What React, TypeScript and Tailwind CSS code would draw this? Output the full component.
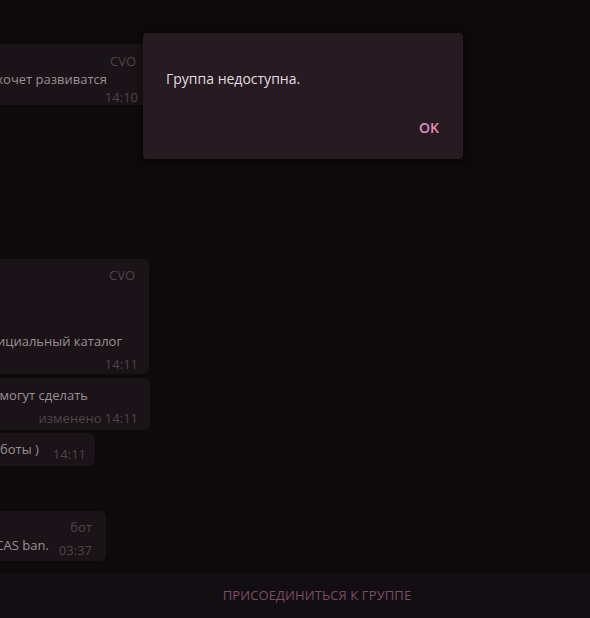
import React from "react";

const meta = "text-[13px] leading-[18px] text-[#4f454a] whitespace-nowrap";
const msg = "text-[13px] leading-[18px] text-[#9a9095] whitespace-nowrap";

export default function App() {
  return (
    <div
      className="relative w-[590px] h-[618px] overflow-hidden bg-[#0e090b]"
      style={{ fontFamily: '"Open Sans", "Noto Sans", sans-serif' }}
    >
      <div className="flex flex-col h-[573px] overflow-hidden">
        {/* bubble 1 */}
        <div className="mt-[44px] -ml-[150px] w-[300px] h-[61px] rounded-[6px] bg-[#1a1317] pt-[8px] flex flex-col">
          <div className={`${meta} text-right pr-[14px]`}>CVO</div>
          <div className={`${msg} text-right pr-[43px]`}>хочет развиватся</div>
          <div className={`${meta} text-right pr-[12px] leading-[17px]`}>14:10</div>
        </div>
        {/* bubble 2 */}
        <div className="mt-[154px] -ml-[151px] w-[300px] h-[115px] rounded-[6px] bg-[#1a1317] pt-[7px] flex flex-col">
          <div className={`${meta} text-right pr-[14px]`}>CVO</div>
          <div className="h-[48px]" />
          <div className={`${msg} text-right pr-[27px]`}>ициальный каталог</div>
          <div className={`${meta} text-right pr-[11px] mt-[5px]`}>14:11</div>
        </div>
        {/* bubble 3 */}
        <div className="mt-[4px] -ml-[150px] w-[300px] h-[52px] rounded-[6px] bg-[#1a1317] pt-[8px] flex flex-col">
          <div className={`${msg} text-right pr-[62px]`}>могут сделать</div>
          <div className={`${meta} text-right pr-[12px] mt-[5px]`}>изменено 14:11</div>
        </div>
        {/* bubble 4 */}
        <div className="mt-[3px] -ml-[205px] w-[300px] h-[33px] rounded-[6px] bg-[#1a1317] pt-[7px] flex items-start justify-end pr-[9px]">
          <span className={msg}>боты )</span>
          <span className={`${meta} ml-[14px] mt-[5px]`}>14:11</span>
        </div>
        {/* bubble 5 */}
        <div className="mt-[45px] -ml-[194px] w-[300px] h-[50px] rounded-[6px] bg-[#1a1317] pt-[7px] flex flex-col">
          <div className={`${meta} text-right pr-[14px]`}>бот</div>
          <div className="flex justify-end pr-[14px] items-start">
            <span className={msg}>CAS ban.</span>
            <span className={`${meta} ml-[10px] mt-[5px]`}>03:37</span>
          </div>
        </div>
      </div>

      {/* bottom bar */}
      <div className="h-[45px] bg-[#130e11] flex items-center justify-center pl-[44px]">
        <span className="text-[13px] text-[#7d4c66] tracking-[0.1px]">ПРИСОЕДИНИТЬСЯ К ГРУППЕ</span>
      </div>

      {/* dialog */}
      <div className="absolute left-[143px] top-[33px] w-[320px] h-[126px] rounded-[4px] bg-[#251b21] shadow-[0_2px_10px_rgba(0,0,0,0.5)]">
        <div className="pl-[23px] pt-[36px] text-[14px] leading-[20px] text-[#e4dde1]">
          Группа недоступна.
        </div>
        <div className="absolute right-[24px] top-[85px] text-[14px] leading-[20px] font-semibold text-[#e58bbd]">
          OK
        </div>
      </div>
    </div>
  );
}
